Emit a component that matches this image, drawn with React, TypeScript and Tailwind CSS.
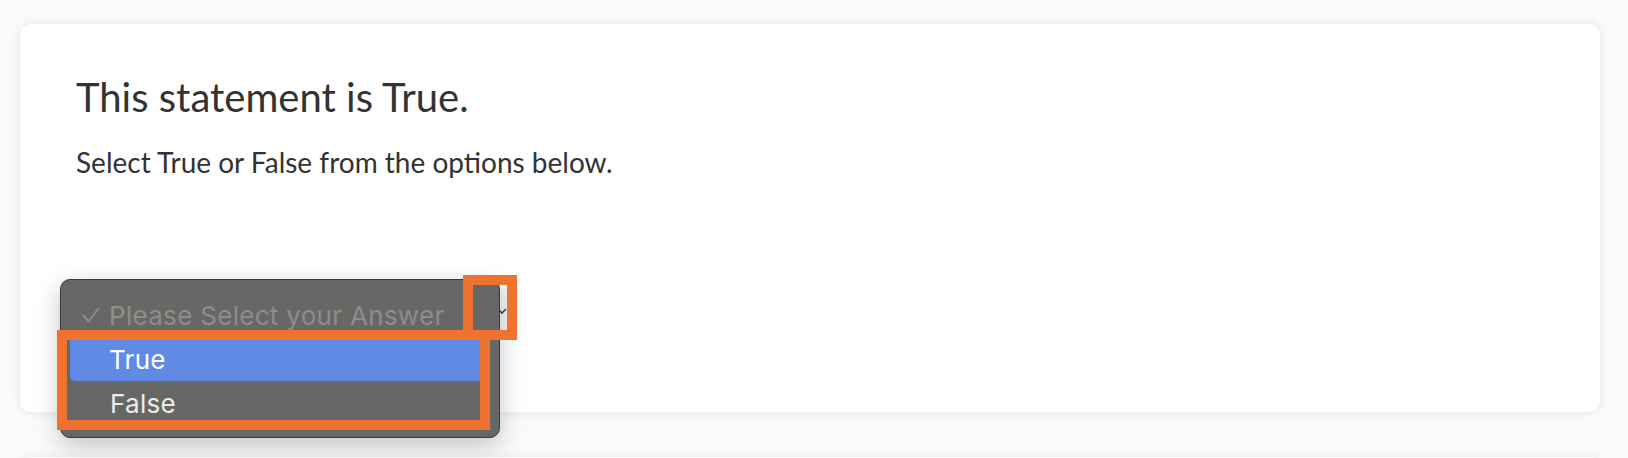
import React from "react";

function Check() {
  return (
    <svg width="18" height="16" viewBox="0 0 18 16" className="block shrink-0">
      <path d="M1.5 8.5 L6.5 14.5 L16.5 1.5" fill="none" stroke="#8d8d8b" strokeWidth="2" strokeLinecap="round" strokeLinejoin="round" />
    </svg>
  );
}

function Chevron() {
  return (
    <svg width="12" height="14" viewBox="0 0 12 14" className="block">
      <path d="M2 5 L6 9 L10 5" fill="none" stroke="#4a4a4a" strokeWidth="1.6" />
    </svg>
  );
}

export default function App() {
  return (
    <div className="min-h-[458px] w-[1628px] overflow-hidden bg-[#fafafa] pt-[24px] pl-[20px] pr-[28px]">
      <div className="flex h-[388px] flex-col rounded-[10px] bg-white px-[40px] pt-[49px] shadow-[0_0_9px_rgba(0,0,0,0.10)]">
        <div className="flex flex-col px-[16px]" style={{ fontFamily: "Lato, 'Noto Sans', sans-serif" }}>
          <h1 className="text-[40px] leading-[48px] text-[#333333]">This statement is True.</h1>
          <p className="mt-[23px] text-[28px] leading-[36px] text-[#333333]">
            Select True or False from the options below.
          </p>
        </div>

        {/* select control with its open native menu */}
        <div className="relative mt-[108px] h-[46px] w-[452px]" style={{ fontFamily: "Inter, 'Liberation Sans', sans-serif" }}>
          <div className="flex h-full items-center justify-end rounded-[6px] bg-[#f4f4f4] pr-[4px] shadow-[0_1px_2px_rgba(0,0,0,0.18)]">
            <Chevron />
          </div>

          {/* popup menu */}
          <div className="absolute left-0 top-[-9px] flex h-[159px] w-[440px] flex-col rounded-[10px] border border-[#3a3a3a] bg-[#676765] px-[9px] pt-[13px] shadow-[0_8px_26px_rgba(0,0,0,0.22)]">
            <div className="flex h-[44px] items-center gap-[9px] pl-[12px] text-[26px] tracking-[0.3px] text-[#8d8d8b]">
              <Check />
              <span>Please Select your Answer</span>
            </div>
            <div className="flex h-[44px] items-center rounded-[5px] bg-[#618ae5] pl-[39px] text-[26px] tracking-[0.3px] text-white">
              True
            </div>
            <div className="flex h-[44px] items-center pl-[40px] text-[26px] tracking-[0.3px] text-[#ececec]">
              False
            </div>
          </div>

          {/* annotation boxes */}
          <div className="pointer-events-none absolute left-[403px] top-[-13px] h-[65px] w-[54px] border-[10px] border-[#ee7330]" />
          <div className="pointer-events-none absolute left-[-3px] top-[42px] h-[100px] w-[433px] border-[10px] border-[#ee7330]" />
        </div>
      </div>
      <div className="mt-[45px] h-[20px] rounded-t-[10px] bg-white shadow-[0_0_9px_rgba(0,0,0,0.08)]" />
    </div>
  );
}
